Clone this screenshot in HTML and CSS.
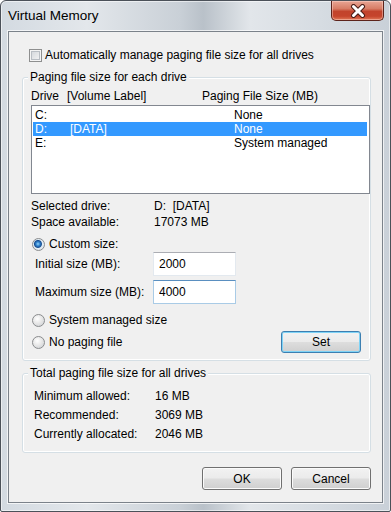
FILE: index.html
```html
<!DOCTYPE html>
<html lang="en">

<head>
  <meta charset="UTF-8" />
  <title>Virtual Memory</title>
  <link rel="stylesheet" href="styles.css">
</head>

<body>
  <div class="window">
    <div class="titlebar">
      <span class="title">Virtual Memory</span>
      <div class="close">
        <svg width="20" height="14" viewBox="0 0 20 14">
          <path d="M5.5 2.5 L14.5 11.5 M14.5 2.5 L5.5 11.5" stroke="#4a1d16" stroke-width="5" stroke-linecap="round" fill="none" />
          <path d="M5.5 2.5 L14.5 11.5 M14.5 2.5 L5.5 11.5" stroke="#fff" stroke-width="3" stroke-linecap="round" fill="none" />
        </svg>
      </div>
    </div>
    <div class="client">
      <div class="check-row"><span class="checkbox"></span>Automatically manage paging file size for all drives</div>

      <fieldset class="group drives">
        <legend>Paging file size for each drive</legend>
        <div class="list-head"><span>Drive</span><span>[Volume Label]</span><span>Paging File Size (MB)</span></div>
        <div class="listbox">
          <div class="row"><span>C:</span><span></span><span>None</span></div>
          <div class="row selected"><span>D:</span><span>[DATA]</span><span>None</span></div>
          <div class="row"><span>E:</span><span></span><span>System managed</span></div>
        </div>
        <div class="info first"><span class="key">Selected drive:</span><span>D:&nbsp;&nbsp;[DATA]</span></div>
        <div class="info"><span class="key">Space available:</span><span>17073 MB</span></div>
        <div class="radio-row custom"><span class="radio on"></span>Custom size:</div>
        <div class="size-row"><span class="key">Initial size (MB):</span><input class="edit" type="text" value="2000"></div>
        <div class="size-row second"><span class="key">Maximum size (MB):</span><input class="edit focus" type="text" value="4000"></div>
        <div class="radio-row system"><span class="radio"></span>System managed size</div>
        <div class="last-row">
          <div class="radio-row"><span class="radio"></span>No paging file</div>
          <button class="btn default">Set</button>
        </div>
      </fieldset>

      <fieldset class="group totals">
        <legend>Total paging file size for all drives</legend>
        <div class="stat"><span class="key">Minimum allowed:</span><span>16 MB</span></div>
        <div class="stat"><span class="key">Recommended:</span><span>3069 MB</span></div>
        <div class="stat"><span class="key">Currently allocated:</span><span>2046 MB</span></div>
      </fieldset>

      <div class="actions">
        <button class="btn">OK</button>
        <button class="btn">Cancel</button>
      </div>
    </div>
  </div>
</body>

</html>
```

FILE: styles.css
```css
body {
  margin: 0;
  font-family: "Liberation Sans", Arial, sans-serif;
  font-size: 12px;
  color: #000;
}

.window {
  width: 391px;
  height: 512px;
  box-sizing: border-box;
  border: 1px solid #4b5159;
  border-radius: 6px 6px 2px 2px;
  background: linear-gradient(90deg, #d3dae1 0%, #e3e7eb 22%, #c9d0d7 46%, #b9c1c9 52%, #e2e6ea 64%, #d6dce2 82%, #c9d0d8 100%);
  box-shadow: inset 0 0 0 1px rgba(255, 255, 255, 0.55);
  display: flex;
  flex-direction: column;
}

.titlebar {
  height: 30px;
  display: flex;
  align-items: flex-start;
}

.title {
  padding: 7px 0 0 7px;
  font-size: 13.5px;
  line-height: 16px;
}

.close {
  margin-left: auto;
  margin-right: 6px;
  width: 53px;
  height: 20px;
  box-sizing: border-box;
  border: 1px solid #5c231b;
  border-top: none;
  border-radius: 0 0 5px 5px;
  background: linear-gradient(#e8a594 0%, #d77d66 40%, #c2432c 55%, #c5442c 80%, #e07858 100%);
  box-shadow: inset 0 0 0 1px rgba(255, 220, 210, 0.45);
  display: flex;
  align-items: center;
  justify-content: center;
}

.client {
  flex: 1;
  margin: 0 7px 8px;
  border: 1px solid #7b828a;
  background: #f0f0f0;
  box-shadow: 0 0 0 1px rgba(255, 255, 255, 0.7);
}

.check-row {
  display: flex;
  align-items: center;
  gap: 3px;
  height: 15px;
  line-height: 15px;
  margin: 16px 0 0 20px;
}

.checkbox {
  width: 13px;
  height: 13px;
  box-sizing: border-box;
  border: 1px solid #8e8f8f;
  background: linear-gradient(135deg, #cfd3d8, #f7f7f7);
  box-shadow: inset 0 0 0 1px #f4f4f4, inset 0 0 0 2px #b9bec4;
}

.group {
  margin: 7px 11px 0 13px;
  padding: 0 0 7px 8px;
  border: 1px solid #d5dfe5;
  border-radius: 3px;
  box-shadow: inset 0 0 0 1px #fff;
  min-width: 0;
}

.group legend {
  padding: 0 2px;
  margin-left: -3px;
  line-height: 15px;
  background: #f0f0f0;
}

.list-head {
  display: grid;
  grid-template-columns: 36px 135px 1fr;
  margin-top: 4px;
  line-height: 15px;
}

.listbox {
  margin-top: 1px;
  height: 89px;
  box-sizing: border-box;
  border: 1px solid #828790;
  background: #fff;
  padding: 2px 2px 0 1px;
}

.row {
  display: grid;
  grid-template-columns: 35px 164px 1fr;
  height: 14px;
  line-height: 14px;
  padding-left: 2px;
}

.row.selected {
  background: #3399ff;
  color: #fff;
}

.info {
  display: flex;
  line-height: 16px;
}

.info.first {
  margin-top: 4px;
}

.info .key {
  width: 123px;
}

.radio-row {
  display: flex;
  align-items: center;
  gap: 4px;
  height: 15px;
  line-height: 15px;
  margin-left: 1px;
}

.radio {
  width: 13px;
  height: 13px;
  box-sizing: border-box;
  border: 1px solid #8a8c8e;
  border-radius: 50%;
  background: radial-gradient(circle at 40% 35%, #ffffff 0, #e8e8e8 45%, #c9cdd1 100%);
}

.radio.on {
  background: radial-gradient(circle at 45% 45%, #9ad6f7 0, #2f83cf 2px, #1a4f91 3.5px, #e4eef5 4.5px, #d6dbe0 100%);
}

.custom {
  margin-top: 7px;
}

.size-row {
  display: flex;
  align-items: center;
  height: 24px;
  padding-left: 4px;
}

.size-row.second {
  margin-top: 4px;
}

.size-row .key {
  width: 118px;
}

.edit {
  width: 83px;
  height: 24px;
  box-sizing: border-box;
  margin: 0;
  padding: 0 5px;
  border: 1px solid #e3e9ef;
  border-top-color: #abadb3;
  background: #fff;
  font: inherit;
  color: #000;
  outline: none;
}

.edit.focus {
  border-color: #a9cbe6;
  border-top-color: #5a8fc0;
}

.system {
  margin-top: 9px;
}

.last-row {
  display: flex;
  align-items: center;
  justify-content: space-between;
  margin-top: 3px;
  height: 22px;
  padding-right: 9px;
}

.btn {
  width: 80px;
  height: 23px;
  box-sizing: border-box;
  padding: 0;
  border: 1px solid #707070;
  border-radius: 3px;
  background: linear-gradient(#f2f2f2 0%, #ebebeb 48%, #dddddd 52%, #cfcfcf 100%);
  box-shadow: inset 0 0 0 1px #fbfbfb;
  font: inherit;
  color: #000;
}

.btn.default {
  height: 22px;
  border-color: #3c7fb1;
  box-shadow: inset 0 0 0 1px #7fd3f6;
}

.totals {
  margin-top: 5px;
  padding-top: 6px;
  padding-bottom: 8px;
}

.stat {
  display: flex;
  line-height: 19px;
  padding-left: 3px;
}

.stat .key {
  width: 121px;
}

.actions {
  display: flex;
  justify-content: flex-end;
  gap: 9px;
  margin: 14px 11px 0 0;
}
```
